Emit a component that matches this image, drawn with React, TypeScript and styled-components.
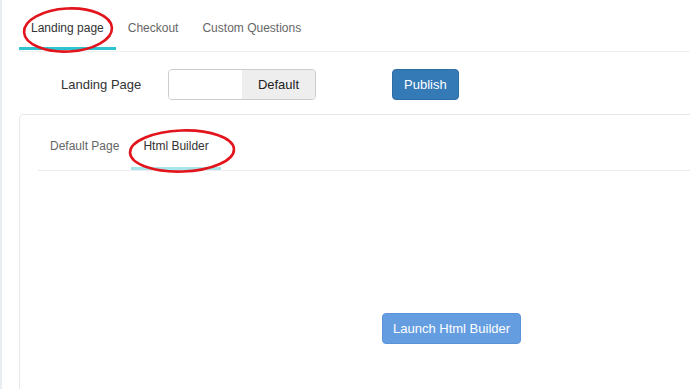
import React from "react";
import styled, { createGlobalStyle } from "styled-components";

const Global = createGlobalStyle`
  html, body { margin: 0; padding: 0; background: #fff; }
  body { font-family: "Liberation Sans", Arial, sans-serif; color: #333; overflow: hidden; }
  * { box-sizing: border-box; }
`;

const Page = styled.div`
  position: relative;
  width: 690px;
  height: 389px;
  overflow: hidden;
  border-left: 2px solid #e8edf2;
  padding-left: 17px;
`;

const TabBar = styled.div<{ $inner?: boolean }>`
  display: flex;
  height: ${(p) => (p.$inner ? 46 : 52)}px;
  border-bottom: 1px solid ${(p) => (p.$inner ? "#e9edf1" : "#edf0f3")};
  margin-right: -40px;
`;

const Tab = styled.div<{ $active?: boolean; $inner?: boolean }>`
  display: flex;
  align-items: center;
  padding: ${(p) => (p.$inner ? "0 12px" : "9px 12px 0")};
  font-size: 12px;
  color: ${(p) => (p.$active ? "#333" : "#666")};
  border-bottom: 3px solid
    ${(p) => (p.$active ? (p.$inner ? "#a6e5ea" : "#2fc2cf") : "transparent")};
  margin-bottom: ${(p) => (p.$inner ? 0 : 1)}px;
`;

const FormRow = styled.div`
  display: flex;
  align-items: flex-start;
  padding: 17px 0 0 42px;
  height: 62px;
`;

const Label = styled.div`
  font-size: 13px;
  color: #333;
  width: 107px;
  height: 31px;
  display: flex;
  align-items: center;
`;

const InputGroup = styled.div`
  display: flex;
  width: 148px;
  height: 31px;
  border: 1px solid #ccc;
  border-radius: 4px;
  overflow: hidden;
  box-shadow: inset 0 1px 1px rgba(0, 0, 0, 0.06);
`;

const Input = styled.div`
  flex: 0 0 73px;
  background: #fff;
`;

const Addon = styled.div`
  flex: 1;
  background: #eee;
  display: flex;
  align-items: center;
  justify-content: center;
  font-size: 13px;
  color: #222;
`;

const Button = styled.button<{ $light?: boolean }>`
  font-family: "Liberation Sans", Arial, sans-serif;
  font-size: 13px;
  color: #fff;
  height: 31px;
  padding: 0 ${(p) => (p.$light ? 10 : 11)}px;
  border-radius: 4px;
  border: 1px solid ${(p) => (p.$light ? "#5b92da" : "#2e6da4")};
  background: ${(p) => (p.$light ? "#659de1" : "#337ab7")};
`;

const PublishWrap = styled.div`
  margin-left: 76px;
`;

const Panel = styled.div`
  border: 1px solid #e4e8ec;
  border-radius: 4px;
  margin-right: -60px;
  height: 300px;
  padding: 10px 0 0 18px;
`;

const PanelBody = styled.div`
  padding: 142px 0 0 344px;
`;

const Marks = styled.svg`
  position: absolute;
  left: 0;
  top: 0;
  pointer-events: none;
`;

export default function App() {
  return (
    <>
      <Global />
      <Page>
        <TabBar>
          <Tab $active>Landing page</Tab>
          <Tab>Checkout</Tab>
          <Tab>Custom Questions</Tab>
        </TabBar>
        <FormRow>
          <Label>Landing Page</Label>
          <InputGroup>
            <Input />
            <Addon>Default</Addon>
          </InputGroup>
          <PublishWrap>
            <Button>Publish</Button>
          </PublishWrap>
        </FormRow>
        <Panel>
          <TabBar $inner>
            <Tab $inner>Default Page</Tab>
            <Tab $inner $active>Html Builder</Tab>
          </TabBar>
          <PanelBody>
            <Button $light>Launch Html Builder</Button>
          </PanelBody>
        </Panel>
        <Marks width="690" height="389" viewBox="0 0 690 389">
          <ellipse cx="66" cy="30" rx="44" ry="21.5" fill="none" stroke="#e2141c" strokeWidth="2.6" transform="rotate(-3 66 30)" />
          <ellipse cx="180" cy="151" rx="52" ry="20.5" fill="none" stroke="#e2141c" strokeWidth="2.6" transform="rotate(-2 180 151)" />
        </Marks>
      </Page>
    </>
  );
}
